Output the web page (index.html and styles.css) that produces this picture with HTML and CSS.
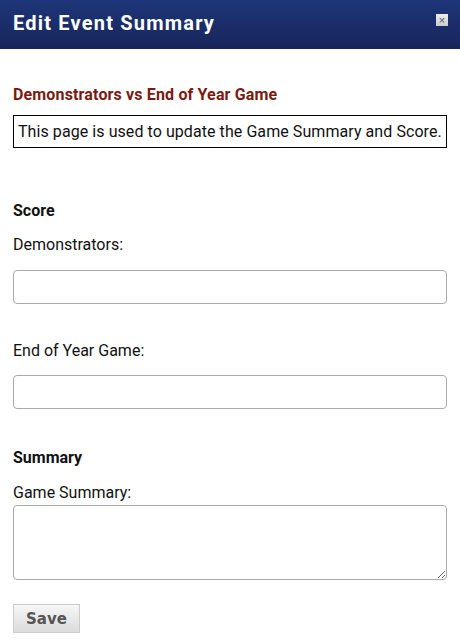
FILE: index.html
```html
<!DOCTYPE html>
<html>
<head>
    <title>Edit Event Summary</title>
    <link rel="stylesheet" href="styles.css">
</head>
<body>
    <div class="titlebar">
        <h1>Edit Event Summary</h1>
        <button class="close-btn" title="Close">&times;</button>
    </div>
    <div class="content">
        <h2 class="event-name">Demonstrators vs End of Year Game</h2>
        <div class="notice">This page is used to update the Game Summary and Score.</div>

        <h3 class="section-title">Score</h3>
        <label for="home-score">Demonstrators:</label>
        <input type="text" id="home-score">

        <label for="away-score" class="spaced">End of Year Game:</label>
        <input type="text" id="away-score">

        <h3 class="section-title second">Summary</h3>
        <label for="summary" class="tight">Game Summary:</label>
        <textarea id="summary"></textarea>

        <div class="actions">
            <button class="save-btn">Save</button>
        </div>
    </div>
</body>
</html>
```

FILE: styles.css
```css
body {
    margin: 0;
    font-family: Roboto, "Liberation Sans", Arial, sans-serif;
    background-color: white;
    color: #111;
}
.titlebar {
    height: 49px;
    box-sizing: border-box;
    display: flex;
    align-items: flex-start;
    justify-content: space-between;
    padding: 11px 12px 0 13px;
    background: linear-gradient(#1d3679, #18255a);
}
h1 {
    margin: 0;
    color: white;
    font-size: 20px;
    font-weight: bold;
    letter-spacing: 1.2px;
}
.close-btn {
    width: 12px;
    height: 12px;
    margin-top: 3px;
    padding: 0;
    border: none;
    background: linear-gradient(#eee, #ccc);
    color: #555;
    font-size: 11px;
    line-height: 12px;
    cursor: pointer;
}
.content {
    display: flex;
    flex-direction: column;
    align-items: flex-start;
    padding: 0 13px;
}
.event-name {
    margin: 36px 0 11px;
    color: #7b1a11;
    font-size: 16px;
    font-weight: bold;
    letter-spacing: 0.15px;
}
.notice {
    border: 1px solid black;
    padding: 6px 4px 6px 4px;
    font-size: 16px;
    letter-spacing: 0.07px;
    white-space: nowrap;
}
.section-title {
    margin: 53px 0 15px;
    font-size: 16px;
    font-weight: bold;
}
.section-title.second {
    margin-top: 39px;
    margin-bottom: 16px;
}
label {
    font-size: 16px;
    margin-bottom: 16px;
}
label.spaced {
    margin-top: 37px;
    margin-bottom: 15px;
}
label.tight {
    margin-bottom: 3px;
}
input, textarea {
    box-sizing: border-box;
    width: 100%;
    border: 1px solid #aaa;
    border-radius: 4px;
    font-size: 16px;
    font-family: inherit;
}
input {
    height: 34px;
}
textarea {
    height: 75px;
    resize: vertical;
}
.actions {
    margin-top: 24px;
}
.save-btn {
    width: 67px;
    height: 29px;
    border: 1px solid #ccc;
    background: linear-gradient(#f6f6f6, #dcdcdc);
    color: #555;
    font-family: "DejaVu Sans", Verdana, sans-serif;
    font-size: 15px;
    font-weight: bold;
    cursor: pointer;
}
```
